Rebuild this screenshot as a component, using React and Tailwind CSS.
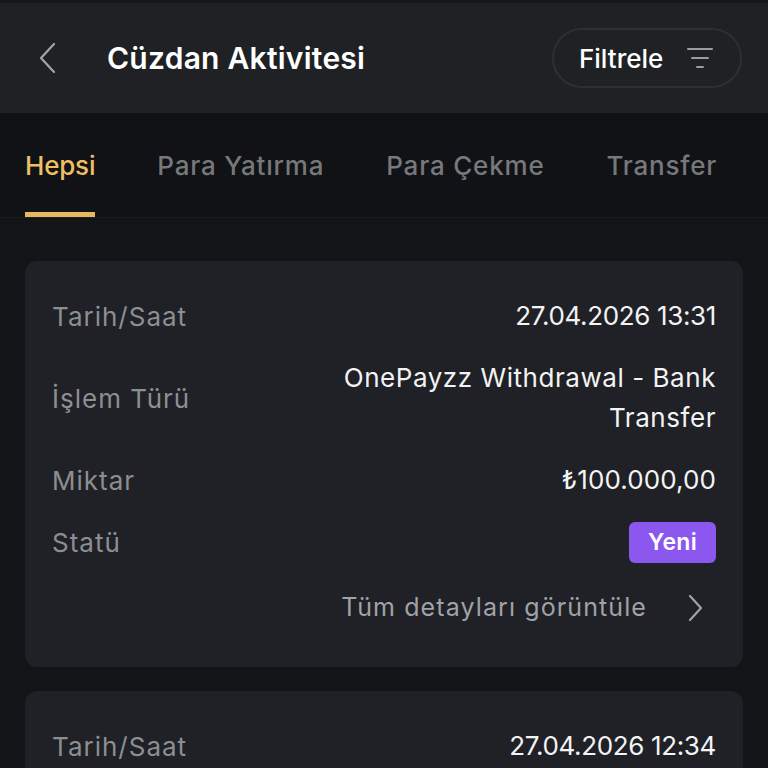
import React from 'react';

const font = { fontFamily: 'Inter, "Noto Sans", sans-serif' };

function Row({ label, children, className = '' }) {
    return (
        <div className={`flex items-center justify-between ${className}`}>
            <span className="text-[26px] text-[#8d8e92] tracking-[1px]">{label}</span>
            <div className="text-right text-[26px] text-[#f3f3f3] leading-[40px] tracking-[0.1px]">{children}</div>
        </div>
    );
}

function Card({ date, short }) {
    return (
        <div className="bg-[#1f2126] rounded-xl px-[27px] pt-[36px] pb-[39px]">
            <Row label="Tarih/Saat" className="h-[38px]">
                <span className="tracking-[-0.35px]">{date}</span>
            </Row>
            {!short && (
                <>
                    <Row label="İşlem Türü" className="mt-[23px]">
                        <div className="tracking-[0.55px] leading-[40px]">OnePayzz Withdrawal - Bank</div>
                        <div className="tracking-[0.55px] leading-[40px]">Transfer</div>
                    </Row>
                    <Row label="Miktar" className="mt-[23px] h-[38px]">₺100.000,00</Row>
                    <Row label="Statü" className="mt-[22px] h-[42px]">
                        <span className="inline-flex items-center h-[41px] px-[19px] rounded-md bg-[#8b57ef] text-white text-[23px] font-semibold tracking-[0.3px]">Yeni</span>
                    </Row>
                    <div className="flex items-center justify-end mt-[25px] h-[40px] gap-[39px] pr-[12px]">
                        <span className="text-[25px] text-[#a1a2a6] tracking-[1.1px]">Tüm detayları görüntüle</span>
                        <svg width="18" height="28" viewBox="0 0 18 28" fill="none" stroke="#a1a2a6" strokeWidth="2.2" strokeLinecap="round" strokeLinejoin="round">
                            <path d="M4 2 L15 14 L4 26" />
                        </svg>
                    </div>
                </>
            )}
        </div>
    );
}

export default function App() {
    const tabs = ['Hepsi', 'Para Yatırma', 'Para Çekme', 'Transfer'];
    return (
        <div className="w-[768px] h-[768px] overflow-hidden bg-[#131418]" style={font}>
            <div className="h-[3px] bg-[#16171a]" />
            <header className="h-[110px] bg-[#1f2125] flex items-center pl-[38px] pr-[26px]">
                <svg width="20" height="32" viewBox="0 0 20 32" fill="none" stroke="#a3a4a8" strokeWidth="2.2" strokeLinecap="round" strokeLinejoin="round">
                    <path d="M16 2 L3 16 L16 30" />
                </svg>
                <h1 className="ml-[49px] text-[30px] font-semibold text-white tracking-[0.25px]">Cüzdan Aktivitesi</h1>
                <button className="ml-auto h-[60px] w-[190px] rounded-full border-2 border-[#2d2f34] flex items-center pl-[25px] gap-[24px]">
                    <span className="text-[26px] font-medium text-white">Filtrele</span>
                    <svg width="26" height="24" viewBox="0 0 26 24" fill="none" stroke="#9c9da1" strokeWidth="2" strokeLinecap="round">
                        <path d="M1 3 H25" />
                        <path d="M5 12 H21" />
                        <path d="M10 21 H16" />
                    </svg>
                </button>
            </header>
            <nav className="h-[105px] bg-[#111215] border-b border-[#1c1d21] flex items-stretch pl-[25px]">
                {tabs.map((t, i) => (
                    <div
                        key={t}
                        className={`flex items-center text-[26px] font-medium ${i === 0 ? 'text-[#efbf64] border-b-[5px] border-[#e6b860] pt-[5px] tracking-[-0.2px]' : 'text-[#77787c] ml-[62px] tracking-[0.8px]'}`}
                    >
                        {t}
                    </div>
                ))}
            </nav>
            <main className="px-[25px] pt-[43px] flex flex-col gap-[24px]">
                <Card date="27.04.2026 13:31" />
                <Card date="27.04.2026 12:34" short />
            </main>
        </div>
    );
}
